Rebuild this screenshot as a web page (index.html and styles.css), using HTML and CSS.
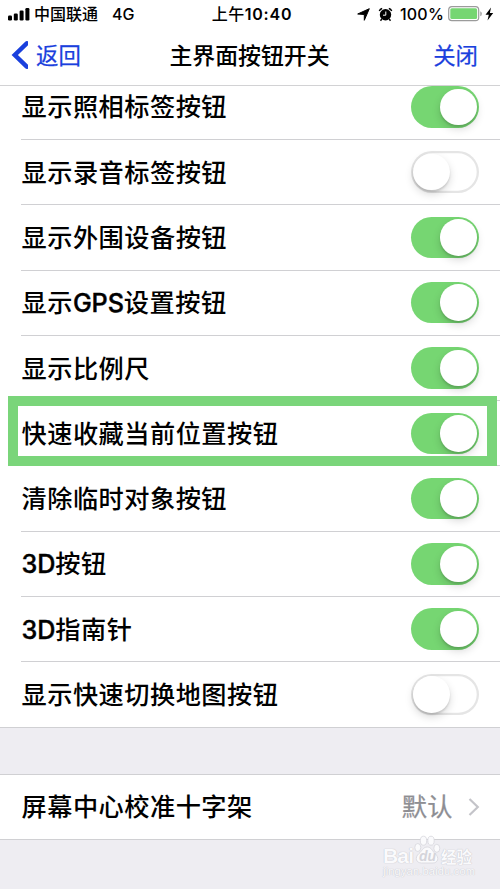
FILE: index.html
```html
<!DOCTYPE html>
<html lang="zh-CN">
<head>
    <meta charset="UTF-8">
    <meta name="viewport" content="width=device-width, initial-scale=1.0">
    <title>主界面按钮开关</title>
    <link rel="stylesheet" href="styles.css">
</head>
<body>
    <header class="header">
        <div class="status-bar">
            <div class="status-left">
                <svg class="signal" width="23" height="14" viewBox="0 0 23 14">
                    <rect x="0" y="8.5" width="4" height="5" rx="1.2"/>
                    <rect x="5.8" y="6.5" width="4" height="7" rx="1.2"/>
                    <rect x="11.6" y="3.5" width="4" height="10" rx="1.2"/>
                    <rect x="17.4" y="1" width="4" height="12.5" rx="1.2"/>
                </svg>
                <span class="carrier">中国联通</span>
                <span class="network">4G</span>
            </div>
            <div class="clock">上午<b>10:40</b></div>
            <div class="status-right">
                <svg class="location" width="13" height="13" viewBox="0 0 13 13">
                    <path d="M12.3.7L7.300 12.300V6.500L.7 6z" stroke="#000" stroke-width="1" stroke-linejoin="round"/>
                </svg>
                <svg class="alarm" width="15" height="15" viewBox="0 0 15 15">
                    <circle cx="7.5" cy="7.8" r="5.7"/>
                    <path d="M3.8 12l-1.3 1.7M11.2 12l1.3 1.7M1.3 4Q2 2 4.2 1.5M13.7 4Q13 2 10.8 1.5" fill="none" stroke="#000" stroke-width="1.4"/>
                    <path d="M7.8 4.5v3.7H5" fill="none" stroke="#fff" stroke-width="1"/>
                </svg>
                <span class="percent">100%</span>
                <svg class="battery" width="35" height="16" viewBox="0 0 35 16">
                    <rect x=".7" y=".7" width="30" height="14" rx="3.2" fill="#fff" stroke="#9b9b9b" stroke-width="1.2"/>
                    <rect x="2.3" y="2.3" width="26.8" height="10.8" rx="1.5" fill="#76d672"/>
                    <path d="M32.3 5.2q1.5.5 1.5 2.5t-1.5 2.5z" fill="#9b9b9b"/>
                </svg>
                <svg class="bolt" width="9" height="14" viewBox="0 0 9 14">
                    <path d="M6 .5L.5 7.7h3.3L2.5 13.5 8.2 5.9H4.9z"/>
                </svg>
            </div>
        </div>
        <nav class="nav-bar">
            <a class="back">
                <svg width="19" height="30" viewBox="0 0 19 30">
                    <path d="M17.8 3.3L5.800 15l12 11.700" fill="none" stroke="#1a40dd" stroke-width="4.5" stroke-linecap="round"/>
                </svg>
                <span>返回</span>
            </a>
            <h1>主界面按钮开关</h1>
            <a class="close">关闭</a>
        </nav>
    </header>

    <main>
        <ul class="list">
            <li class="row"><span class="label">显示照相标签按钮</span><span class="switch on"></span></li>
            <li class="row"><span class="label">显示录音标签按钮</span><span class="switch"></span></li>
            <li class="row"><span class="label">显示外围设备按钮</span><span class="switch on"></span></li>
            <li class="row"><span class="label">显示<span class="latin">GPS</span>设置按钮</span><span class="switch on"></span></li>
            <li class="row"><span class="label">显示比例尺</span><span class="switch on"></span></li>
            <li class="row highlighted"><span class="label">快速收藏当前位置按钮</span><span class="switch on"></span></li>
            <li class="row"><span class="label">清除临时对象按钮</span><span class="switch on"></span></li>
            <li class="row"><span class="label"><span class="latin">3D</span>按钮</span><span class="switch on"></span></li>
            <li class="row"><span class="label"><span class="latin">3D</span>指南针</span><span class="switch on"></span></li>
            <li class="row"><span class="label">显示快速切换地图按钮</span><span class="switch"></span></li>
        </ul>

        <ul class="list second">
            <li class="row">
                <span class="label">屏幕中心校准十字架</span>
                <span class="value">默认</span>
                <svg class="chevron" width="12" height="20" viewBox="0 0 12 20">
                    <path d="M1.5 2L9.8 10l-8.3 8" fill="none" stroke="#c4c4c9" stroke-width="2.2"/>
                </svg>
            </li>
        </ul>
    </main>

    <div class="watermark">
        <div class="brand">
            <span class="bai">Bai</span>
            <span class="paw">
                <svg width="28" height="30" viewBox="0 0 28 30">
                    <g fill="#fafafc" stroke="#d6d6dc" stroke-width=".8">
                        <ellipse cx="4.8" cy="12.5" rx="3" ry="4"/>
                        <ellipse cx="10.5" cy="5.7" rx="3.2" ry="4.5"/>
                        <ellipse cx="18" cy="5.7" rx="3.2" ry="4.5"/>
                        <ellipse cx="23.8" cy="13.3" rx="3" ry="4"/>
                        <path d="M14.2 12c4 0 5 4 7.8 6.500 5 4.500 2.500 9.500-2 9.500H8.500C3.500 28 1 23 6 18.500 9 16 10.200 12 14.200 12z"/>
                    </g>
                </svg>
                <i>du</i>
            </span>
            <span class="exp">经验</span>
        </div>
        <div class="site">jingyan.baidu.com</div>
    </div>
</body>
</html>
```

FILE: styles.css
```css
*,
*::before,
*::after {
    box-sizing: border-box;
}
body {
    margin: 0;
    height: 889px;
    overflow: hidden;
    position: relative;
    background: #eeedf2;
    color: #000;
    font-family: Inter, "Noto Sans CJK SC", sans-serif;
}
.header {
    position: relative;
    z-index: 2;
    height: 86px;
    background: #fff;
    border-bottom: 1px solid #d2d2d4;
}

/* Status bar */
.status-bar {
    display: grid;
    grid-template-columns: 1fr auto 1fr;
    align-items: center;
    height: 28px;
    padding: 0 6px 0 8px;
    font-size: 16px;
    line-height: 28px;
    font-weight: 500;
}
.status-left,
.status-right {
    display: flex;
    align-items: center;
}
.status-right {
    justify-content: flex-end;
}
.carrier {
    margin-left: 3px;
}
.network {
    margin-left: 14px;
}
.clock {
    padding-left: 2px;
    letter-spacing: 0.5px;
}
.clock b {
    font-weight: 600;
    letter-spacing: 0.8px;
}
.alarm {
    margin: 0 7px 0 8px;
}
.percent {
    letter-spacing: 0.2px;
}
.battery {
    margin-left: 4px;
}
.bolt {
    margin-left: 2px;
}

/* Navigation bar */
.nav-bar {
    display: grid;
    grid-template-columns: 1fr auto 1fr;
    align-items: center;
    height: 53px;
    padding: 0 22px 0 9px;
    font-size: 22.4px;
    color: #1a40dd;
}
.nav-bar h1 {
    margin: 0;
    padding: 0 0 1px 12px;
    font-size: 22.9px;
    font-weight: 500;
    color: #000;
}
.back {
    display: flex;
    align-items: center;
    gap: 8px;
}
.back span,
.close {
    padding-bottom: 1px;
    -webkit-text-stroke: 0.25px #1a40dd;
}
.close {
    text-align: right;
}

/* Settings list */
.list {
    list-style: none;
    margin: -11.3px 0 0;
    padding: 0;
    background: #fff;
}
.row {
    position: relative;
    display: flex;
    align-items: center;
    height: 65.3px;
    margin-left: 21px;
    padding-right: 21px;
    border-bottom: 1px solid #d0d0d3;
}
.row:last-child {
    margin-left: 0;
    padding-left: 21px;
}
.label {
    flex: 1;
    padding: 0 0 3px 0.5px;
    font-size: 25.2px;
    font-weight: 500;
    letter-spacing: 0.5px;
}
.latin {
    letter-spacing: -0.1px;
    -webkit-text-stroke: 0.4px #000;
}
.value {
    padding-bottom: 3px;
    font-size: 25.2px;
    letter-spacing: 0.45px;
    color: #8e8e93;
    -webkit-text-stroke: 0.25px #8e8e93;
}
.chevron {
    margin-left: 15px;
    margin-right: -1px;
}
.second {
    margin-top: 46px;
    border-top: 1px solid #d0d0d3;
}
.second .row {
    height: 65px;
}

/* Toggle */
.switch {
    width: 68.5px;
    height: 41.5px;
    padding: 2.5px;
    border-radius: 21px;
    background: #fff;
    box-shadow: inset 0 0 0 2.3px #e5e5e5;
}
.switch::before {
    content: "";
    display: block;
    width: 36.5px;
    height: 36.5px;
    border-radius: 50%;
    background: #fff;
    box-shadow: 0 4px 9px rgba(0,0,0,0.15), 0 2px 2px rgba(0,0,0,0.12);
}
.switch.on {
    background: #76d672;
    box-shadow: none;
}
.switch.on::before {
    margin-left: 27px;
}

/* Frame drawn over the highlighted row */
.highlighted::after {
    content: "";
    position: absolute;
    top: -5.5px;
    left: -13px;
    right: 3px;
    height: 70.5px;
    border: 10px solid #7ad57a;
    z-index: 1;
}

.watermark {
    position: absolute;
    left: 383px;
    top: 835px;
    width: 94px;
    color: #fafafc;
    font-family: "Liberation Sans", "Noto Sans CJK SC", sans-serif;
    text-shadow: 0 0 1px #c0c0c8, 0 0 1px #d0d0d6;
}
.brand {
    display: flex;
    align-items: center;
    height: 30px;
    font-size: 21px;
    font-weight: bold;
}
.bai {
    width: 30px;
    letter-spacing: -0.8px;
    padding-top: 12px;
}
.paw {
    position: relative;
    height: 30px;
}
.paw i {
    position: absolute;
    left: 6px;
    top: 14px;
    font-size: 14px;
    line-height: 14px;
    color: #d4d4da;
    text-shadow: none;
}
.exp {
    padding-top: 11px;
    font-size: 15.5px;
}
.site {
    font-size: 11px;
    line-height: 12px;
    letter-spacing: 0.2px;
}
```
